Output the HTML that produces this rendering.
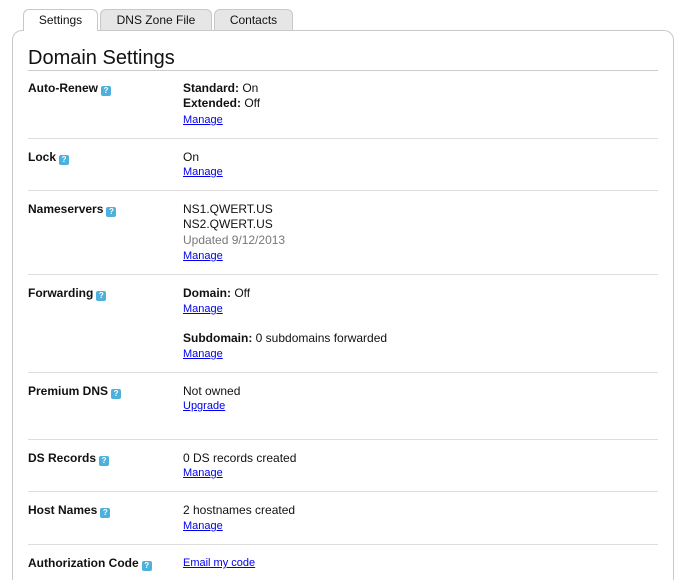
<!DOCTYPE html>
<html><head><meta charset="utf-8"><style>
html,body{margin:0;width:686px;height:580px;overflow:hidden}
body{background:#fff;font-family:"Liberation Sans",sans-serif;color:#111;position:relative}
.tab{position:absolute;top:9px;height:21px;border:1px solid #c8c8c8;border-bottom:none;border-radius:6px 6px 0 0;background:#e6e6e6;font-size:12px;text-align:center;line-height:20px;box-sizing:border-box}
.panel{position:absolute;left:12px;top:30px;width:662px;height:550px;border:1px solid #c8c8c8;border-bottom:none;border-radius:10px 10px 0 0;box-sizing:border-box}
h1{position:absolute;left:28px;top:46px;margin:0;font-weight:normal;font-size:20px;line-height:24px}
.hr{position:absolute;left:28px;width:630px;height:1px;background:#ddd}
.t{position:absolute;font-size:12px;line-height:14px;white-space:nowrap}
.l{left:28px;font-weight:bold}
.v{left:183px}
.a{left:183px;font-size:11px;color:#00e;text-decoration:underline}
.g{color:#777}
.q{display:inline-block;width:10px;height:10px;background:#4fb0dc;border-radius:2px;color:#fff;font-size:8px;line-height:10px;text-align:center;vertical-align:-1px;margin-left:3px;font-weight:bold}
</style></head><body>
<div class="panel"></div>
<div class="tab" style="left:23px;width:75px;background:#fff;height:22px;z-index:2">Settings</div>
<div class="tab" style="left:100px;width:112px">DNS Zone File</div>
<div class="tab" style="left:214px;width:79px">Contacts</div>
<h1>Domain Settings</h1>
<div class="hr" style="top:70px;background:#ccc"></div>

<div class="t l" style="top:81px">Auto-Renew<span class="q">?</span></div>
<div class="t v" style="top:81px"><b>Standard:</b> On</div>
<div class="t v" style="top:96px"><b>Extended:</b> Off</div>
<div class="t a" style="top:113px">Manage</div>
<div class="hr" style="top:138px"></div>

<div class="t l" style="top:150px">Lock<span class="q">?</span></div>
<div class="t v" style="top:150px">On</div>
<div class="t a" style="top:165px">Manage</div>
<div class="hr" style="top:190px"></div>

<div class="t l" style="top:202px">Nameservers<span class="q">?</span></div>
<div class="t v" style="top:202px">NS1.QWERT.US</div>
<div class="t v" style="top:217px">NS2.QWERT.US</div>
<div class="t v g" style="top:233px">Updated 9/12/2013</div>
<div class="t a" style="top:249px">Manage</div>
<div class="hr" style="top:274px"></div>

<div class="t l" style="top:286px">Forwarding<span class="q">?</span></div>
<div class="t v" style="top:286px"><b>Domain:</b> Off</div>
<div class="t a" style="top:302px">Manage</div>
<div class="t v" style="top:331px"><b>Subdomain:</b> 0 subdomains forwarded</div>
<div class="t a" style="top:347px">Manage</div>
<div class="hr" style="top:372px"></div>

<div class="t l" style="top:384px">Premium DNS<span class="q">?</span></div>
<div class="t v" style="top:384px">Not owned</div>
<div class="t a" style="top:399px">Upgrade</div>
<div class="hr" style="top:439px"></div>

<div class="t l" style="top:451px">DS Records<span class="q">?</span></div>
<div class="t v" style="top:451px">0 DS records created</div>
<div class="t a" style="top:466px">Manage</div>
<div class="hr" style="top:491px"></div>

<div class="t l" style="top:503px">Host Names<span class="q">?</span></div>
<div class="t v" style="top:503px">2 hostnames created</div>
<div class="t a" style="top:519px">Manage</div>
<div class="hr" style="top:544px"></div>

<div class="t l" style="top:556px">Authorization Code<span class="q">?</span></div>
<div class="t a" style="top:556px">Email my code</div>
</body></html>
